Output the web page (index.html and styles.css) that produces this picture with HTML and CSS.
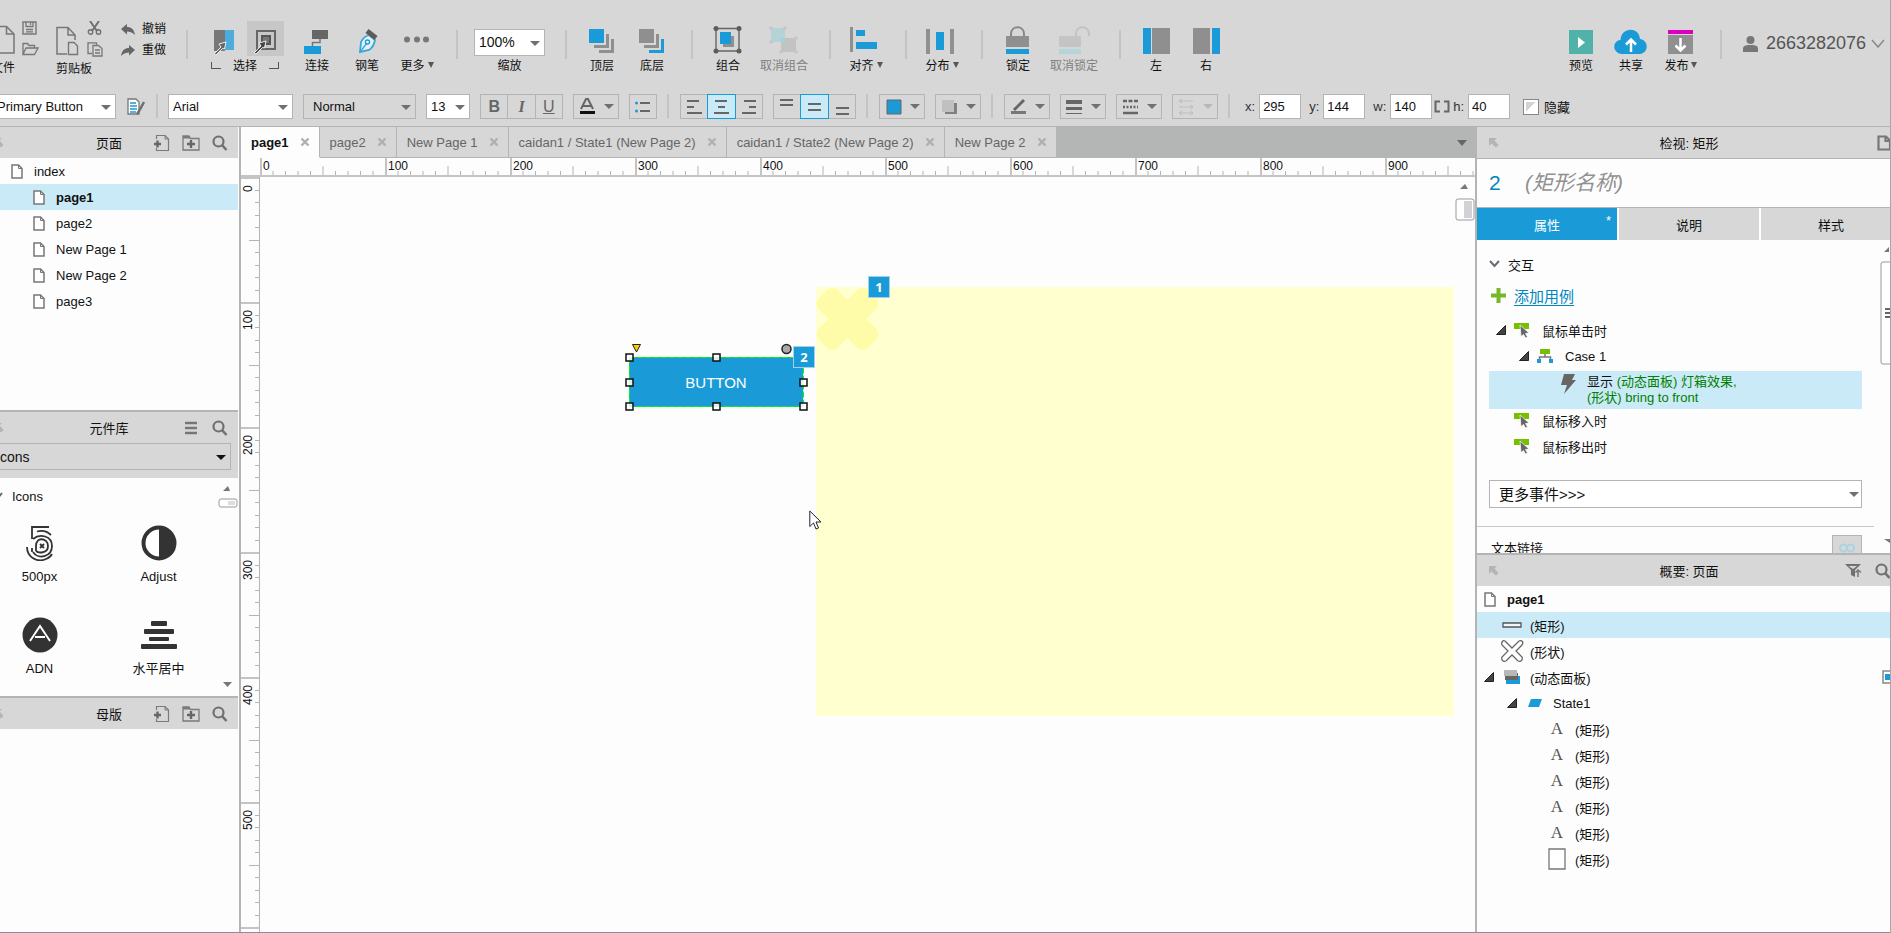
FILE: index.html
```html
<!DOCTYPE html>
<html lang="zh-CN">
<head>
    <meta charset="UTF-8">
    <meta name="viewport" content="width=device-width, initial-scale=1.0">
    <title>page1</title>
    <link rel="stylesheet" href="styles.css">
</head>
<body>
    <!-- shared icons -->
    <svg class="sprite" width="0" height="0" aria-hidden="true">
        <symbol id="i-page" viewBox="0 0 12 15">
            <path d="M1 1H7.500L11 4.500V14H1Z" fill="#fff" stroke="#777" stroke-width="1.500"/>
            <path d="M7.500 1V4.500H11" fill="none" stroke="#777"/>
        </symbol>
        <symbol id="i-add-page" viewBox="0 0 16 18">
            <path d="M2.500 5V1.500H11L14.500 5V16.500H2.500V14" fill="none" stroke="#7a7a7a" stroke-width="1.200"/>
            <path d="M11 1.500V5H14.500" fill="none" stroke="#7a7a7a"/>
            <path d="M0 10H7M3.500 6.500V13.500" stroke="#666" stroke-width="2.400"/>
        </symbol>
        <symbol id="i-add-folder" viewBox="0 0 18 16">
            <path d="M1 15V1H7L8.500 3.500H17V15Z" fill="none" stroke="#7a7a7a" stroke-width="1.300"/>
            <path d="M1 1H7L8.500 3.500H1Z" fill="#7a7a7a"/>
            <path d="M5 9H13M9 5V13" stroke="#666" stroke-width="2.400"/>
        </symbol>
        <symbol id="i-search" viewBox="0 0 16 16">
            <circle cx="6.500" cy="6.500" r="5" fill="none" stroke="#707070" stroke-width="2.200"/>
            <path d="M10 10L14.500 15" stroke="#707070" stroke-width="2.600"/>
        </symbol>
        <symbol id="i-corner" viewBox="0 0 10 10">
            <path d="M0 0H8L5.500 2.500L9.500 7L7 9.500L2.500 5.500L0 8Z" fill="#b5b5b5"/>
        </symbol>
        <symbol id="i-event" viewBox="0 0 16 16">
            <path d="M0 1H15V7H0Z" fill="#76c000"/>
            <path d="M6 3L15 11L11.500 11.500L13.500 15L11.500 16L9.500 12.500L7 14.500Z" fill="#666" stroke="#fff" stroke-width=".7"/>
        </symbol>
        <symbol id="i-toggle" viewBox="0 0 10 10">
            <path d="M.5 9.500H9.500V.5Z" fill="#444" stroke="#222"/>
        </symbol>
        <symbol id="i-close" viewBox="0 0 10 10">
            <path d="M1.500 1.500L8.500 8.500M8.500 1.500L1.500 8.500" stroke="#b0b0b0" stroke-width="2.400"/>
        </symbol>
    </svg>

    <div class="app">
        <nav class="menubar">
            <span>文件</span><span>编辑</span><span>视图</span><span>项目</span><span>布局</span><span>发布</span><span>团队</span><span>账号</span><span>帮助</span>
        </nav>

        <header class="toolbar">
            <div class="file-tools">
                <div class="file-block">
                    <div class="file-icons">
                        <button aria-label="新建"><svg width="24" height="35"><path d="M2 5.500H15.500L23 13V32H2ZM15.500 5.500V13H23" fill="none" stroke="#777" stroke-width="1.500"/></svg></button>
                        <div class="mini">
                            <button aria-label="保存"><svg width="16" height="14"><path d="M1 1H14V13H1Z" fill="none" stroke="#777" stroke-width="1.400"/><path d="M4 1V5.500H11V1M8.500 1.500V4M4 8.500H11M4 10.800H11" fill="none" stroke="#777" stroke-width="1.300"/></svg></button>
                            <button aria-label="打开"><svg width="17" height="14"><path d="M1 12.500V1.500H5.500L7 3.500H12.500V6M1 12.500L4 6H16L12.500 12.500Z" fill="none" stroke="#777" stroke-width="1.300"/></svg></button>
                        </div>
                    </div>
                    <span class="file-label">文件</span>
                </div>
                <div class="file-block">
                    <div class="file-icons">
                        <button aria-label="粘贴"><svg width="24" height="35"><path d="M11 32H1V5.500H12L19 13V18M12 5.500V13H19" fill="none" stroke="#777" stroke-width="1.500"/><path d="M12.500 20.500H18L21.500 24V32.500H12.500Z" fill="none" stroke="#777" stroke-width="1.400"/></svg></button>
                        <div class="mini">
                            <button aria-label="剪切"><svg width="16" height="14"><path d="M3 0L10 10M12 0L5 10" stroke="#707070" stroke-width="2"/><circle cx="3.500" cy="11" r="2.200" fill="none" stroke="#707070" stroke-width="1.400"/><circle cx="11.500" cy="11" r="2.200" fill="none" stroke="#707070" stroke-width="1.400"/></svg></button>
                            <button aria-label="复制"><svg width="17" height="15"><path d="M5 11.500H1V.8H9.500V3" fill="none" stroke="#777" stroke-width="1.300"/><path d="M6 3.500H11.500L15 6.500V14H6ZM8 8H13M8 11H13" fill="none" stroke="#777" stroke-width="1.300"/></svg></button>
                        </div>
                    </div>
                    <span class="file-label">剪贴板</span>
                </div>
                <div class="history">
                    <button><svg width="14" height="12"><path d="M0 5L6 0V3C10 3 13 5 14 11C11 8 9 7.500 6 7.500V10.500Z" fill="#666"/></svg>撤销</button>
                    <button><svg width="14" height="12"><path d="M14 5L8 0V3C4 3 1 5 0 11C3 8 5 7.500 8 7.500V10.500Z" fill="#666"/></svg>重做</button>
                </div>
            </div>
            <i class="sep"></i>

            <div class="select-tool">
                <div class="select-icons">
                    <button aria-label="相交选择"><svg width="23" height="35"><path d="M1 9H12V30H1Z" fill="#777"/><path d="M12 9H21V29H12Z" fill="#4eacdc"/><path d="M1 33L8 26L6 23L13 21L11.500 28L9.500 27.500L3 34Z" fill="#666" stroke="#eee"/></svg></button>
                    <button class="active" aria-label="包含选择"><svg width="37" height="35"><path d="M10 10H28V28H10Z" fill="none" stroke="#666" stroke-width="2"/><path d="M15 15H23V23H15Z" fill="#777" stroke="#555" stroke-width="2"/><path d="M7 32L14 25L12 22L19 20L17.500 27L15.500 26.500L9 33Z" fill="#444" stroke="#eee"/></svg></button>
                </div>
                <div class="select-label">
                    <i class="bracket"></i><span>选择</span><i class="bracket bracket-end"></i>
                </div>
            </div>
            <button class="tool"><svg width="50" height="35"><path d="M20 9H36V18H20Z" fill="#666"/><path d="M12 25H29V33H12Z" fill="#1a9bd7"/><path d="M28 18V21.500H20.500V25" fill="none" stroke="#777" stroke-width="1.500"/></svg><span>连接</span></button>
            <button class="tool"><svg width="50" height="35"><path d="M18 31L19 21C21 17 24 15 27 14L33 19C32 24 30 27 27 29Z" fill="#e4f1f8" stroke="#3ba6da" stroke-width="1.800"/><path d="M18 31L25 22" stroke="#3ba6da" stroke-width="1.300"/><circle cx="25.500" cy="21" r="2" fill="#fff" stroke="#1a9bd7" stroke-width="1.400"/><path d="M25 10L34 17" stroke="#5c5c5c" stroke-width="5"/></svg><span>钢笔</span></button>
            <button class="tool"><svg width="50" height="35"><g fill="#777"><circle cx="15" cy="18.500" r="3"/><circle cx="25" cy="18.500" r="3"/><circle cx="34" cy="18.500" r="3"/></g></svg><span class="caret">更多</span></button>
            <i class="sep"></i>

            <div class="zoom">
                <span class="drop"><select id="zoom"><option>100%</option></select></span>
                <label for="zoom">缩放</label>
            </div>
            <i class="sep"></i>

            <button class="tool"><svg width="50" height="35"><path d="M12 8H27V22H12Z" fill="#1a9bd7"/><path d="M32 13V27H17V24H29V13ZM37 18V32H22V29H34V18Z" fill="#8f8f8f"/></svg><span>顶层</span></button>
            <button class="tool"><svg width="50" height="35"><path d="M12 8H27V22H12ZM32 13V27H17V24H29V13Z" fill="#8f8f8f"/><path d="M37 18V32H22V29H34V18Z" fill="#1a9bd7"/></svg><span>底层</span></button>
            <i class="sep"></i>

            <button class="tool"><svg width="50" height="35"><path d="M20 15H31V26H20Z" fill="#909090"/><path d="M17 11H28V23H17Z" fill="#1a9bd7"/><path d="M13 7.500H36V30H13Z" fill="none" stroke="#666" stroke-width="1.400"/><g fill="#5c5c5c"><circle cx="13" cy="7.500" r="2.500"/><circle cx="36" cy="7.500" r="2.500"/><circle cx="13" cy="30" r="2.500"/><circle cx="36" cy="30" r="2.500"/></g></svg><span>组合</span></button>
            <button class="tool wide" disabled><svg width="62" height="35"><path d="M18 7H32V21H18Z" fill="#b5d2d7"/><path d="M28 17H43V31H28Z" fill="#c3c3c3"/><path d="M28 17H32V21H28Z" fill="#9fd3de"/><g fill="#c6c6c6"><circle cx="18" cy="7" r="1.800"/><circle cx="32" cy="7" r="1.800"/><circle cx="18" cy="21" r="1.800"/><circle cx="43" cy="17" r="1.800"/><circle cx="28" cy="31" r="1.800"/><circle cx="43" cy="31" r="1.800"/></g></svg><span>取消组合</span></button>
            <i class="sep"></i>

            <button class="tool"><svg width="50" height="35"><path d="M9 6H12V31H9Z" fill="#909090"/><path d="M15 9H24V15H15ZM15 21H36V28H15Z" fill="#1a9bd7"/></svg><span class="caret">对齐</span></button>
            <i class="sep"></i>

            <button class="tool"><svg width="50" height="35"><path d="M9 8H13V33H9ZM33 8H37V33H33Z" fill="#909090"/><path d="M19 11H27V29H19Z" fill="#1a9bd7"/></svg><span class="caret">分布</span></button>
            <i class="sep"></i>

            <button class="tool"><svg width="50" height="35"><path d="M18 16V13C18 4 31 4 31 13V16" fill="none" stroke="#888" stroke-width="2"/><path d="M13 15H36V26H13Z" fill="#8f8f8f"/><path d="M13 28H36V33H13Z" fill="#1a9bd7"/></svg><span>锁定</span></button>
            <button class="tool wide" disabled><svg width="62" height="35"><path d="M33 16V13C33 4 46 4 46 13V15" fill="none" stroke="#c2c2c2" stroke-width="2"/><path d="M16 15H38V26H16Z" fill="#c4c4c4"/><path d="M16 28H38V33H16Z" fill="#b3d4d8"/></svg><span>取消锁定</span></button>
            <i class="sep"></i>

            <button class="tool"><svg width="50" height="35"><path d="M12 7H20V33H12Z" fill="#1a9bd7"/><path d="M21 7H39V33H21Z" fill="#8f8f8f"/></svg><span>左</span></button>
            <button class="tool"><svg width="50" height="35"><path d="M12 7H29V33H12Z" fill="#8f8f8f"/><path d="M31 7H39V33H31Z" fill="#1a9bd7"/></svg><span>右</span></button>

            <div class="publish">
                <button class="tool"><svg width="50" height="35"><path d="M13 9H37V33H13Z" fill="#50b2a8"/><path d="M22 16V27L29 21.500Z" fill="#fff"/></svg><span>预览</span></button>
                <button class="tool"><svg width="50" height="35"><path d="M16 33C6 32 6 20 14.500 19C15 6 33 5 34 18C43 19 43 32 34 33Z" fill="#1a9bd7"/><path d="M25 31V19M20 23.500L25 18.500L30 23.500" fill="none" stroke="#fff" stroke-width="2.500"/></svg><span>共享</span></button>
                <button class="tool"><svg width="50" height="35"><path d="M12 9H37V13H12Z" fill="#db00c0"/><path d="M12 14H37V33H12Z" fill="#909090"/><path d="M24.500 17V29M19.500 24.500L24.500 29.500L29.500 24.500" fill="none" stroke="#fff" stroke-width="2.500"/></svg><span class="caret">发布</span></button>
                <i class="sep"></i>
                <button class="user">
                    <svg width="15" height="16"><circle cx="7.500" cy="4" r="4" fill="#777"/><path d="M0 16V12C1 9 4 9 7.500 9C11 9 14 9 15 12V16Z" fill="#777"/></svg>
                    <span>2663282076</span>
                    <svg width="14" height="9"><path d="M1 1L7 8L13 1" fill="none" stroke="#888" stroke-width="1.500"/></svg>
                </button>
            </div>
        </header>

        <div class="formatbar">
            <span class="drop style-drop"><select aria-label="样式"><option>Primary Button</option></select></span>
            <button class="plain" aria-label="管理样式"><svg width="18" height="18"><path d="M1 1H9L12 4V16H1Z" fill="#fff" stroke="#777" stroke-width="1.300"/><path d="M3 5H9M3 8H10M3 11H10M3 14H9" stroke="#1a9bd7" stroke-width="1.500"/><path d="M17 4L12 13L10 16" fill="none" stroke="#707070" stroke-width="2.500"/></svg></button>
            <i class="sep"></i>
            <span class="drop font-drop"><select aria-label="字体"><option>Arial</option></select></span>
            <span class="drop weight-drop"><select aria-label="字重"><option>Normal</option></select></span>
            <span class="drop size-drop"><select aria-label="字号"><option>13</option></select></span>
            <div class="seg">
                <button class="bold" aria-label="粗体">B</button>
                <button class="italic" aria-label="斜体">I</button>
                <button class="underline" aria-label="下划线">U</button>
            </div>
            <button class="pick" aria-label="文字颜色"><svg width="20" height="18"><path d="M3 11L8 1H10L15 11M5 8H13" fill="none" stroke="#666" stroke-width="2"/><path d="M2 13H17V16H2Z" fill="#111"/></svg></button>
            <button class="box" aria-label="项目符号"><svg width="18" height="14"><circle cx="2.500" cy="3" r="1.500" fill="#1a9bd7"/><circle cx="2.500" cy="11" r="1.500" fill="#1a9bd7"/><path d="M6 3H16M6 11H16" stroke="#666" stroke-width="2"/></svg></button>
            <i class="sep"></i>
            <div class="seg">
                <button aria-label="左对齐"><svg width="16" height="16"><path d="M1 2H13M1 8H8M1 14H16" stroke="#666" stroke-width="2"/></svg></button>
                <button class="on" aria-label="居中"><svg width="16" height="16"><path d="M2 2H14M5 8H12M1 14H16" stroke="#666" stroke-width="2"/></svg></button>
                <button aria-label="右对齐"><svg width="16" height="16"><path d="M3 2H15M8 8H15M1 14H15" stroke="#666" stroke-width="2"/></svg></button>
            </div>
            <div class="seg">
                <button aria-label="顶部对齐"><svg width="16" height="16"><path d="M1 1H14M1 6H14" stroke="#666" stroke-width="2"/></svg></button>
                <button class="on" aria-label="垂直居中"><svg width="16" height="16"><path d="M2 5H15M2 11H15" stroke="#666" stroke-width="2"/></svg></button>
                <button aria-label="底部对齐"><svg width="16" height="16"><path d="M2 9H15M2 15H15" stroke="#666" stroke-width="2"/></svg></button>
            </div>
            <i class="sep"></i>
            <button class="pick" aria-label="填充颜色"><svg width="20" height="18"><path d="M3 2H17V16H3Z" fill="#1a9bd7" stroke="#666"/></svg></button>
            <button class="pick" aria-label="外部阴影"><svg width="20" height="18"><path d="M5 5H17V16H5Z" fill="#808080"/><path d="M2 2H14V14H2Z" fill="#c0c0c0"/></svg></button>
            <i class="sep"></i>
            <button class="pick" aria-label="线条颜色"><svg width="20" height="18"><path d="M2 13H17V16H2Z" fill="#777"/><path d="M5 12L15 2" stroke="#666" stroke-width="3"/></svg></button>
            <button class="pick" aria-label="线宽"><svg width="20" height="18"><path d="M1 2H17V6H1ZM1 9H17V12H1ZM1 15H17V16H1Z" fill="#666"/></svg></button>
            <button class="pick" aria-label="线条样式"><svg width="20" height="18"><path d="M2 3H17" stroke="#666" stroke-width="2.500" stroke-dasharray="4 1.500"/><path d="M2 9H17" stroke="#666" stroke-width="2.500" stroke-dasharray="2 1.500"/><path d="M2 15H17" stroke="#666" stroke-width="2.500"/></svg></button>
            <button class="pick" aria-label="箭头样式" disabled><svg width="20" height="18"><path d="M2 3H16M2 9H16M2 15H16M2 3L5 1M2 3L5 5M16 9L13 7M16 9L13 11M2 15L5 13M2 15L5 17M16 15L13 13M16 15L13 17" stroke="#bdbdbd"/></svg></button>
            <i class="sep"></i>
            <div class="fields">
                <label>x: <input type="text" value="295"></label>
                <label>y: <input type="text" value="144"></label>
                <label>w: <input type="text" value="140"></label>
                <button class="ratio" aria-label="保持宽高比"><svg width="16" height="13"><path d="M6 1.500H1.500V11.500H6M10 1.500H14.500V11.500H10" fill="none" stroke="#666" stroke-width="2"/></svg></button>
                <label>h: <input type="text" value="40"></label>
            </div>
            <label class="hidden-check"><input type="checkbox"> 隐藏</label>
        </div>

        <main class="workspace">
            <aside class="left">
                <section class="panel pages">
                    <div class="panel-head">
                        <svg width="10" height="10"><use href="#i-corner"/></svg>
                        <h2>页面</h2>
                        <div class="head-icons">
                            <button aria-label="添加页面"><svg width="16" height="18"><use href="#i-add-page"/></svg></button>
                            <button aria-label="添加文件夹"><svg width="18" height="16"><use href="#i-add-folder"/></svg></button>
                            <button aria-label="搜索"><svg width="16" height="16"><use href="#i-search"/></svg></button>
                        </div>
                    </div>
                    <ul class="page-list">
                        <li class="root"><svg width="12" height="15"><use href="#i-page"/></svg>index</li>
                        <li class="selected"><svg width="12" height="15"><use href="#i-page"/></svg>page1</li>
                        <li><svg width="12" height="15"><use href="#i-page"/></svg>page2</li>
                        <li><svg width="12" height="15"><use href="#i-page"/></svg>New Page 1</li>
                        <li><svg width="12" height="15"><use href="#i-page"/></svg>New Page 2</li>
                        <li><svg width="12" height="15"><use href="#i-page"/></svg>page3</li>
                    </ul>
                </section>

                <section class="panel library">
                    <div class="panel-head">
                        <svg width="10" height="10"><use href="#i-corner"/></svg>
                        <h2>元件库</h2>
                        <div class="head-icons">
                            <button aria-label="选项"><svg width="18" height="14"><path d="M3 2H15M3 7H15M3 12H15" stroke="#777" stroke-width="2.400"/></svg></button>
                            <button aria-label="搜索"><svg width="16" height="16"><use href="#i-search"/></svg></button>
                        </div>
                    </div>
                    <div class="library-pick">
                        <span class="drop"><select aria-label="元件库"><option>Icons</option></select></span>
                    </div>
                    <div class="library-body">
                        <h3><svg width="10" height="8"><path d="M1 1L5 6L9 1" fill="none" stroke="#666" stroke-width="2"/></svg>Icons</h3>
                        <div class="widgets">
                            <figure>
                                <svg width="36" height="36" fill="none" stroke="#333" stroke-width="1.800"><path d="M27 2H10V14M15 6.500C20 5 25 6 29 10M11 14C18 8 30 11 30 21C30 32 16 35 11 27M14 26V21C14 11 26 13 26 21C26 29 16 28 14 26M5 22C5 32 15 38 24 34C27 33 29 31 30 29M10 23V27"/><path d="M18 19L22 23M22 19L18 23"/></svg>
                                <figcaption>500px</figcaption>
                            </figure>
                            <figure>
                                <svg width="36" height="36"><circle cx="18" cy="18" r="15.500" fill="#fff" stroke="#333" stroke-width="4"/><path d="M18 3A15 15 0 0 1 18 33Z" fill="#333"/></svg>
                                <figcaption>Adjust</figcaption>
                            </figure>
                            <figure>
                                <svg width="36" height="36"><circle cx="18" cy="18" r="17.500" fill="#333"/><path d="M8 24L18 9L28 24M13 20H23" fill="none" stroke="#fff" stroke-width="2"/></svg>
                                <figcaption>ADN</figcaption>
                            </figure>
                            <figure>
                                <svg width="36" height="36"><g fill="#333"><rect x="10" y="4" width="16" height="5" rx="1"/><rect x="3" y="12" width="30" height="5" rx="1"/><rect x="8" y="20" width="20" height="4" rx="1"/><rect x="0" y="27" width="36" height="5" rx="1"/></g></svg>
                                <figcaption>水平居中</figcaption>
                            </figure>
                        </div>
                        <div class="mini-scroll">
                            <svg width="20" height="24"><path d="M5 7L10 2L12 7Z" fill="#777"/><rect x="1" y="15" width="18" height="8" rx="2" fill="#fff" stroke="#999"/><path d="M10 17H17V21H10Z" fill="#ddd"/></svg>
                            <svg width="20" height="6"><path d="M5 0H14L9.500 5Z" fill="#777"/></svg>
                        </div>
                    </div>
                </section>

                <section class="panel masters">
                    <div class="panel-head">
                        <svg width="10" height="10"><use href="#i-corner"/></svg>
                        <h2>母版</h2>
                        <div class="head-icons">
                            <button aria-label="添加母版"><svg width="16" height="18"><use href="#i-add-page"/></svg></button>
                            <button aria-label="添加文件夹"><svg width="18" height="16"><use href="#i-add-folder"/></svg></button>
                            <button aria-label="搜索"><svg width="16" height="16"><use href="#i-search"/></svg></button>
                        </div>
                    </div>
                </section>
            </aside>

            <section class="editor">
                <div class="tabs">
                    <button class="tab current">page1<svg width="10" height="10"><use href="#i-close"/></svg></button>
                    <button class="tab">page2<svg width="10" height="10"><use href="#i-close"/></svg></button>
                    <button class="tab">New Page 1<svg width="10" height="10"><use href="#i-close"/></svg></button>
                    <button class="tab">caidan1 / State1 (New Page 2)<svg width="10" height="10"><use href="#i-close"/></svg></button>
                    <button class="tab">caidan1 / State2 (New Page 2)<svg width="10" height="10"><use href="#i-close"/></svg></button>
                    <button class="tab">New Page 2<svg width="10" height="10"><use href="#i-close"/></svg></button>
                    <button class="tab-menu" aria-label="标签列表"></button>
                </div>
                <div class="ruler-x">
                    <svg width="100%" height="19">
                        <defs>
                            <pattern id="ticks-x" width="125" height="19" patternUnits="userSpaceOnUse">
                                <path d="M0 0H2V17H0Z" fill="#c4c4c4"/>
                                <path d="M13 13V17M25.500 13V17M38 13V17M50.500 13V17M75.500 13V17M88 13V17M100.500 13V17M113 13V17M63 8V17" stroke="#b4b4b4"/>
                            </pattern>
                        </defs>
                        <rect width="100%" height="19" fill="url(#ticks-x)"/>
                    </svg>
                    <div class="marks">
                        <span>0</span><span>100</span><span>200</span><span>300</span><span>400</span><span>500</span><span>600</span><span>700</span><span>800</span><span>900</span>
                    </div>
                </div>
                <div class="stage">
                    <div class="ruler-y">
                        <svg width="19" height="100%">
                            <defs>
                                <pattern id="ticks-y" width="19" height="125" patternUnits="userSpaceOnUse">
                                    <path d="M0 0H19V2H0Z" fill="#c4c4c4"/>
                                    <path d="M14 13.500H18M14 25.500H18M14 38.500H18M14 50.500H18M14 75.500H18M14 88.500H18M14 100.500H18M14 113.500H18M8 63.500H18" stroke="#b4b4b4"/>
                                </pattern>
                            </defs>
                            <rect width="19" height="100%" fill="url(#ticks-y)"/>
                        </svg>
                        <div class="marks">
                            <span>0</span><span>100</span><span>200</span><span>300</span><span>400</span><span>500</span>
                        </div>
                    </div>
                    <div class="canvas">
                        <div class="lightbox"></div>
                        <svg class="cross" width="63" height="64"><g fill="#fffca9"><rect x="-3.500" y="18.500" width="70" height="27" rx="8" transform="rotate(45 31.500 32)"/><rect x="-3.500" y="18.500" width="70" height="27" rx="8" transform="rotate(-45 31.500 32)"/></g></svg>
                        <span class="badge badge-1">1</span>
                        <button class="widget-button">BUTTON</button>
                        <svg class="handles" width="190" height="74">
                            <rect x="8.500" y="18.500" width="174" height="49" fill="none" stroke="#0f0" stroke-dasharray="6 2"/>
                            <g fill="#fff" fill-opacity=".85" stroke="#111" stroke-width="1.500">
                                <rect x="5" y="15" width="7" height="7"/><rect x="92" y="15" width="7" height="7"/><rect x="179" y="15" width="7" height="7"/>
                                <rect x="5" y="40" width="7" height="7"/><rect x="179" y="40" width="7" height="7"/>
                                <rect x="5" y="64" width="7" height="7"/><rect x="92" y="64" width="7" height="7"/><rect x="179" y="64" width="7" height="7"/>
                            </g>
                            <path d="M11.500 5.500H19.500L15.500 13Z" fill="#f5d000" stroke="#222"/>
                            <circle cx="165.500" cy="10" r="4.500" fill="#aaa" stroke="#222" stroke-width="1.500"/>
                        </svg>
                        <span class="badge badge-2">2</span>
                        <svg class="pointer" width="14" height="20"><path d="M.8 1V16.500L4.500 13L7 19L9.500 18L7 12H12Z" fill="#fff" stroke="#223"/></svg>
                        <svg class="canvas-scroll" width="20" height="40"><path d="M5 8L10 3L13 8Z" fill="#777"/><rect x="1" y="18" width="18" height="21" rx="2" fill="#fff" stroke="#999"/><path d="M9 20H17V37H9Z" fill="#d0d2d6"/></svg>
                    </div>
                </div>
            </section>

            <aside class="right">
                <section class="inspector">
                    <div class="panel-head">
                        <svg width="10" height="10"><use href="#i-corner"/></svg>
                        <h2>检视: 矩形</h2>
                        <div class="head-icons"><svg width="14" height="16"><path d="M1.500 1.500H9L13 5.500V14.500H1.500ZM8.500 1.500V6H13" fill="none" stroke="#777" stroke-width="2.200"/></svg></div>
                    </div>
                    <div class="name-row">
                        <span class="num">2</span>
                        <input type="text" aria-label="名称" placeholder="(矩形名称)">
                    </div>
                    <div class="ins-tabs">
                        <button class="current">属性<sup>*</sup></button>
                        <button>说明</button>
                        <button>样式</button>
                    </div>
                    <div class="ins-body">
                        <h3><svg width="11" height="8"><path d="M1 1L5.500 6L10 1" fill="none" stroke="#666b75" stroke-width="2"/></svg>交互</h3>
                        <div class="add-case"><svg width="15" height="15"><path d="M7.500 0V15M0 7.500H15" stroke="#76b82a" stroke-width="4"/></svg><a href="#">添加用例</a></div>
                        <div class="event"><svg class="tri" width="10" height="10"><use href="#i-toggle"/></svg><svg width="16" height="16"><use href="#i-event"/></svg><span>鼠标单击时</span></div>
                        <div class="event case"><svg class="tri" width="10" height="10"><use href="#i-toggle"/></svg><svg width="16" height="16"><path d="M3 1H13V6H3Z" fill="#76c000"/><path d="M8 6V9M2.500 12V9H13.500V12" fill="none" stroke="#777" stroke-width="1.500"/><path d="M0 11H4V15H0ZM12 11H16V15H12Z" fill="#1a9bd7"/></svg><span>Case 1</span></div>
                        <div class="action"><svg width="16" height="20"><path d="M3 0H14L11 6H15L3 20L6 11H0Z" fill="#666"/></svg><p>显示 <em>(动态面板) 灯箱效果,<br>(形状) bring to front</em></p></div>
                        <div class="event leaf"><svg width="16" height="16"><use href="#i-event"/></svg><span>鼠标移入时</span></div>
                        <div class="event leaf"><svg width="16" height="16"><use href="#i-event"/></svg><span>鼠标移出时</span></div>
                        <span class="drop more-events"><select aria-label="更多事件"><option>更多事件&gt;&gt;&gt;</option></select></span>
                        <div class="text-link">
                            <span>文本链接</span>
                            <button aria-label="链接" disabled><svg width="18" height="10"><circle cx="5.500" cy="5" r="3.500" fill="none" stroke="#a9d3e0" stroke-width="2"/><circle cx="12.500" cy="5" r="3.500" fill="none" stroke="#a9d3e0" stroke-width="2"/></svg></button>
                        </div>
                        <svg class="ins-scroll" width="10" height="312"><path d="M4 12L9 7V12ZM4 299H10V303Z" fill="#777"/><rect x="1" y="22" width="18" height="102" rx="2" fill="#fff" stroke="#999"/><path d="M5 69H10M5 73H10M5 77H10" stroke="#666" stroke-width="2"/></svg>
                    </div>
                </section>

                <section class="outline">
                    <div class="panel-head">
                        <svg width="10" height="10"><use href="#i-corner"/></svg>
                        <h2>概要: 页面</h2>
                        <div class="head-icons">
                            <button aria-label="筛选"><svg width="18" height="14"><path d="M0 0H16L10 6V13L6 11V6Z" fill="#707070"/><path d="M13 13V6M10.500 8.500L13 6L16 8.500" fill="none" stroke="#777" stroke-width="1.500"/><path d="M3.500 2H12L8 5Z" fill="#d7d7d7"/></svg></button>
                            <button aria-label="搜索"><svg width="16" height="16"><use href="#i-search"/></svg></button>
                        </div>
                    </div>
                    <ul class="tree">
                        <li class="top"><svg width="12" height="15"><use href="#i-page"/></svg>page1</li>
                        <li class="l1 selected"><i></i><svg width="28" height="22"><path d="M5 9H23V13H5Z" fill="#f4f4f4" stroke="#555" stroke-width="1.300"/></svg>(矩形)</li>
                        <li class="l1"><i></i><svg width="28" height="22"><path d="M7 1L14 8L21 1C24 0 26 2 24 5L18 11L24 17C25 20 23 22 20 21L14 15L8 21C5 22 3 20 4 17L10 11L4 5C3 2 5 0 7 1Z" fill="#fff" stroke="#666" stroke-width="1.300"/></svg>(形状)</li>
                        <li class="l1"><i><svg width="10" height="10"><use href="#i-toggle"/></svg></i><svg width="28" height="22"><path d="M8 10H22V18H8Z" fill="#1a9bd7"/><path d="M7 7H20V14H7Z" fill="#666"/><path d="M6 4H19V10H6Z" fill="#b8b8b8"/></svg>(动态面板)<svg class="view-toggle" width="8" height="14"><path d="M9 1H1V13H9" fill="#fff" stroke="#888" stroke-width="1.500"/><path d="M3 4H8V10H3Z" fill="#1a9bd7"/></svg></li>
                        <li class="l2"><i><svg width="10" height="10"><use href="#i-toggle"/></svg></i><svg width="28" height="22"><path d="M10 7H21L18 15H7Z" fill="#1a9bd7"/></svg>State1</li>
                        <li class="l3"><i></i><b>A</b>(矩形)</li>
                        <li class="l3"><i></i><b>A</b>(矩形)</li>
                        <li class="l3"><i></i><b>A</b>(矩形)</li>
                        <li class="l3"><i></i><b>A</b>(矩形)</li>
                        <li class="l3"><i></i><b>A</b>(矩形)</li>
                        <li class="l3"><i></i><svg width="28" height="22"><path d="M6 1H22V21H6Z" fill="#fff" stroke="#777" stroke-width="1.300"/></svg>(矩形)</li>
                    </ul>
                </section>
            </aside>
        </main>
    </div>
</body>
</html>
```
FILE: styles.css
```css
* {
    box-sizing: border-box;
}

body {
    margin: 0;
    font-family: "Liberation Sans", "Noto Sans CJK SC", sans-serif;
    font-size: 13px;
    color: #111;
    background: #fdfdfd;
}

button, input, select {
    font: inherit;
    color: inherit;
    margin: 0;
    padding: 0;
    border: 0;
    border-radius: 0;
    background: none;
}

h2, h3, p, ul, figure {
    margin: 0;
    padding: 0;
    font-size: 13px;
    font-weight: normal;
    list-style: none;
}

svg {
    display: block;
    flex: none;
}

.sprite {
    position: absolute;
}

.app {
    height: 100vh;
    display: flex;
    flex-direction: column;
    overflow: hidden;
    border-right: 1px solid #a8a8a8;
    border-bottom: 1px solid #909090;
}

/* menu, scrolled almost out of the window */
.menubar {
    height: 2px;
    flex: none;
    display: flex;
    align-items: flex-end;
    gap: 20px;
    margin-left: -8px;
    font-size: 13px;
    line-height: 16px;
    background: #d7d7d7;
    overflow: hidden;
}

/* main toolbar */
.toolbar {
    height: 84px;
    flex: none;
    display: flex;
    align-items: flex-start;
    padding-top: 19px;
    background: #d7d7d7;
    font-size: 12px;
    white-space: nowrap;
}

.sep {
    flex: none;
    width: 2px;
    height: 29px;
    background: #c3c3c3;
}

.toolbar .sep {
    margin: 9px 10px 0 14px;
}

.tool {
    width: 50px;
    flex: none;
    display: flex;
    flex-direction: column;
    align-items: center;
    line-height: 21px;
}

.tool.wide {
    width: 62px;
}

.tool:disabled {
    color: #808080;
}

.caret::after {
    content: "";
    display: inline-block;
    margin-left: 3px;
    vertical-align: 2px;
    border: 3px solid transparent;
    border-top: 6px solid #555;
    border-bottom: 0;
}

.file-tools {
    display: flex;
    margin-left: -9px;
}

.file-block {
    width: 65px;
    display: flex;
    flex-direction: column;
}

.file-icons {
    display: flex;
    gap: 7px;
}

.mini {
    display: flex;
    flex-direction: column;
    gap: 7px;
}

.file-label {
    line-height: 24px;
}

.history {
    display: flex;
    flex-direction: column;
    margin-top: -2px;
}

.history button {
    display: flex;
    align-items: center;
    gap: 7px;
    line-height: 21px;
    height: 21px;
}

.file-tools + .sep {
    margin-left: 20px;
}

.select-tool {
    width: 94px;
    padding-left: 13px;
}

.select-icons {
    display: flex;
    justify-content: space-between;
    width: 73px;
    padding-left: 2px;
}

.select-icons .active {
    background: #c7c7c7;
}

.select-label {
    display: flex;
    gap: 12px;
    line-height: 21px;
}

.bracket {
    width: 10px;
    height: 7px;
    margin-top: 6px;
    border-left: 1px solid #555;
    border-bottom: 1px solid #555;
}

.bracket-end {
    border-left: 0;
    border-right: 1px solid #555;
}

.zoom {
    width: 77px;
    padding: 8px 0 0 6px;
    display: flex;
    flex-direction: column;
    align-items: center;
    line-height: 21px;
}

.zoom .drop {
    width: 71px;
    height: 27px;
    font-size: 14px;
}

.zoom + .sep {
    margin-left: 20px;
}

.publish {
    display: flex;
    margin-left: auto;
}

.user {
    display: flex;
    align-items: center;
    height: 45px;
    padding: 0 5px 0 11px;
    font-size: 18px;
    color: #555;
}

.user span {
    margin: 0 5px 0 8px;
}

/* drop-downs */
.drop {
    position: relative;
    display: block;
    height: 25px;
    flex: none;
    border: 1px solid #b4b4b4;
    background: #fff;
}

.drop select {
    appearance: none;
    width: 100%;
    height: 100%;
    padding-left: 4px;
    outline: 0;
}

.drop::after {
    content: "";
    position: absolute;
    right: 4px;
    top: 50%;
    margin-top: -2px;
    border: 5px solid transparent;
    border-top-color: #707070;
    border-bottom: 0;
    pointer-events: none;
}

/* format bar */
.formatbar {
    height: 41px;
    flex: none;
    display: flex;
    align-items: flex-start;
    gap: 10px;
    padding-top: 8px;
    background: #d7d7d7;
    border-bottom: 1px solid #b4b4b4;
}

.formatbar .sep {
    height: 24px;
    margin-right: 1px;
}

.style-drop {
    width: 124px;
    margin-left: -8px;
}

.plain {
    height: 25px;
    margin: 0 1px;
}

.formatbar .plain + .sep {
    margin-right: 0;
}

.font-drop {
    width: 125px;
}

.weight-drop {
    width: 113px;
    background: #d7d7d7;
}

.weight-drop select {
    padding-left: 9px;
}

.size-drop {
    width: 44px;
}

.seg {
    display: flex;
    width: 83px;
    height: 25px;
    flex: none;
}

.seg button {
    flex: 1;
    display: flex;
    align-items: center;
    justify-content: center;
    border: 1px solid #b4b4b4;
    color: #666;
    font-size: 16px;
}

.seg button + button {
    margin-left: -1px;
}

.seg .on {
    background: #cbeaf7;
    border-color: #1a9bd7;
    z-index: 1;
}

.seg .bold {
    font-weight: bold;
}

.seg .italic {
    font-family: "Liberation Serif", serif;
    font-style: italic;
    font-weight: bold;
}

.seg .underline {
    text-decoration: underline;
}

.box, .pick {
    flex: none;
    height: 25px;
    display: flex;
    align-items: center;
    border: 1px solid #b4b4b4;
}

.box {
    width: 28px;
    justify-content: center;
}

.pick {
    width: 46px;
    padding: 0 4px;
    justify-content: space-between;
}

.pick::after {
    content: "";
    border: 5px solid transparent;
    border-top-color: #707070;
    border-bottom: 0;
}

.pick:disabled::after {
    border-top-color: #b8b8b8;
}

.fields {
    display: flex;
    margin-left: 4px;
}

.fields label {
    display: flex;
    align-items: center;
    gap: 4px;
    margin-right: 8px;
    color: #333;
}

.fields input {
    width: 42px;
    height: 25px;
    padding-left: 3px;
    background: #fff;
    border: 1px solid #b4b4b4;
    color: #111;
}

.ratio {
    margin: 0 3px 0 -6px;
}

.hidden-check {
    display: flex;
    align-items: center;
    gap: 5px;
    height: 25px;
    margin-left: -5px;
}

.hidden-check input {
    appearance: none;
    width: 16px;
    height: 16px;
    border: 1px solid #888;
    background: linear-gradient(135deg, #d0d4d6 48%, #fff 50%);
    box-shadow: inset 0 0 0 2px #fff;
}

/* workspace */
.workspace {
    flex: 1;
    min-height: 0;
    display: flex;
}

.left {
    width: 241px;
    flex: none;
    display: flex;
    flex-direction: column;
    padding-right: 1px;
    border-right: 2px solid #b4b4b4;
    overflow: hidden;
}

.panel-head {
    height: 31px;
    flex: none;
    display: grid;
    grid-template-columns: 1fr auto 1fr;
    align-items: center;
    background: #d7d7d7;
}

.left .panel-head {
    margin-left: -21px;
    padding: 0 10px 0 15px;
}

.left .panel-head h2 {
    margin-left: -4px;
}

.head-icons {
    display: flex;
    align-items: center;
    justify-content: flex-end;
    gap: 12px;
}

.pages {
    flex: 0 0 283px;
}

.page-list li {
    display: flex;
    align-items: center;
    gap: 11px;
    height: 26px;
    padding-left: 33px;
}

.page-list .root {
    padding-left: 11px;
}

.selected {
    background: #cbeaf7;
}

.page-list .selected {
    font-weight: bold;
}

.library {
    flex: 0 0 286px;
    min-height: 0;
    border-top: 2px solid #b4b4b4;
    display: flex;
    flex-direction: column;
}

.library-pick {
    height: 35px;
    flex: none;
    padding-right: 7px;
    background: #d7d7d7;
}

.library-pick .drop {
    height: 27px;
    margin-left: -9px;
    background: #d7d7d7;
    font-size: 14px;
}

.library-pick .drop::after {
    border-top-color: #111;
}

.library-body {
    position: relative;
    flex: 1;
    min-height: 0;
    padding-top: 8px;
    overflow: hidden;
}

.library-body h3 {
    display: flex;
    align-items: center;
    gap: 9px;
    height: 20px;
    margin-left: -7px;
}

.widgets {
    display: grid;
    grid-template-columns: 119px 119px;
    padding-top: 19px;
    margin-left: -20px;
}

.widgets figure {
    height: 92px;
    display: flex;
    flex-direction: column;
    align-items: center;
    gap: 6px;
    line-height: 20px;
}

.mini-scroll {
    position: absolute;
    top: 6px;
    right: 0;
    bottom: 8px;
    display: flex;
    flex-direction: column;
    justify-content: space-between;
}

.masters {
    flex: 1;
    border-top: 2px solid #b4b4b4;
}

/* editor */
.editor {
    flex: 1;
    min-width: 0;
    display: flex;
    flex-direction: column;
}

.tabs {
    height: 31px;
    flex: none;
    display: flex;
    background: #b4b6b5;
}

.tab {
    flex: none;
    display: flex;
    align-items: center;
    gap: 11px;
    padding: 0 9px 0 10px;
    background: #d7d7d7;
    border-right: 1px solid #b4b4b4;
    border-bottom: 1px solid #b4b4b4;
    color: #666;
    white-space: nowrap;
}

.tab.current {
    background: #fdfdfd;
    border-bottom-color: #fdfdfd;
    color: #111;
    font-weight: bold;
}

.tab-menu {
    margin-left: auto;
    padding-right: 8px;
}

.tab-menu::after {
    content: "";
    display: block;
    border: 5px solid transparent;
    border-top: 6px solid #666;
    border-bottom: 0;
}

.ruler-x {
    position: relative;
    height: 19px;
    flex: none;
    padding-left: 19px;
    border-bottom: 2px solid #c4c4c4;
    overflow: hidden;
    font-size: 12px;
}

.ruler-x .marks {
    position: absolute;
    top: 0;
    left: 22px;
    display: flex;
    line-height: 16px;
}

.ruler-x span {
    flex: 0 0 125px;
}

.stage {
    flex: 1;
    min-height: 0;
    display: flex;
}

.ruler-y {
    position: relative;
    width: 19px;
    flex: none;
    border-right: 1px solid #b4b4b4;
    overflow: hidden;
    font-size: 12px;
}

.ruler-y .marks {
    position: absolute;
    top: 8px;
    left: 0;
    display: flex;
    flex-direction: column;
    width: 15px;
}

/* numbers read from bottom to top */
.ruler-y span {
    flex: 0 0 125px;
    writing-mode: vertical-rl;
    transform: rotate(180deg);
    text-align: right;
    line-height: 15px;
}

.canvas {
    position: relative;
    flex: 1;
    overflow: hidden;
}

/* widgets placed on the free canvas */
.lightbox {
    position: absolute;
    left: 556px;
    top: 110px;
    width: 638px;
    height: 429px;
    background: #ffffd0;
}

.cross {
    position: absolute;
    left: 556px;
    top: 110px;
}

.widget-button {
    position: absolute;
    left: 369px;
    top: 180px;
    width: 174px;
    height: 50px;
    background: #1a9bd7;
    color: #fff;
    font-size: 15px;
}

.handles {
    position: absolute;
    left: 361px;
    top: 162px;
}

.badge {
    position: absolute;
    width: 22px;
    height: 22px;
    border: 1px solid #9ed3ee;
    background: #1a9bd7;
    color: #fff;
    font: bold 13px/20px "Open Sans", sans-serif;
    text-align: center;
}

.badge-1 {
    left: 608px;
    top: 99px;
}

.badge-2 {
    left: 533px;
    top: 169px;
}

.pointer {
    position: absolute;
    left: 549px;
    top: 333px;
}

.canvas-scroll {
    position: absolute;
    right: 0;
    top: 4px;
}

/* right column */
.right {
    width: 415px;
    flex: none;
    display: flex;
    flex-direction: column;
    border-left: 2px solid #b4b4b4;
    overflow: hidden;
}

.right .panel-head {
    margin-right: -11px;
    padding: 0 10px 0 12px;
}

.right .panel-head h2 {
    margin-left: -2px;
}

.inspector {
    flex: 0 0 426px;
    display: flex;
    flex-direction: column;
    overflow: hidden;
}

.name-row {
    height: 50px;
    flex: none;
    display: flex;
    align-items: center;
    padding-left: 12px;
    border-top: 1px solid #b4b4b4;
    border-bottom: 1px solid #b4b4b4;
    font-size: 21px;
}

.name-row .num {
    width: 36px;
    color: #0086bf;
}

.name-row input {
    flex: 1;
    min-width: 0;
    height: 36px;
    font-style: italic;
}

.name-row input::placeholder {
    color: #909090;
    opacity: 1;
}

.ins-tabs {
    height: 32px;
    flex: none;
    display: flex;
    gap: 2px;
    margin-right: -11px;
}

.ins-tabs button {
    position: relative;
    flex: 1;
    background: #d7d7d7;
}

.ins-tabs .current {
    background: #1a9bd7;
    color: #fff;
}

.ins-tabs sup {
    position: absolute;
    top: 6px;
    right: 6px;
    font-size: 13px;
    line-height: 14px;
}

.ins-body {
    position: relative;
    flex: 1;
    min-height: 0;
    padding: 11px 28px 0 12px;
    overflow: hidden;
}

.ins-body h3 {
    display: flex;
    align-items: center;
    gap: 8px;
    height: 26px;
}

.add-case {
    display: flex;
    align-items: center;
    gap: 8px;
    height: 36px;
    padding-left: 2px;
    font-size: 15px;
}

.add-case a {
    color: #0086bf;
    text-underline-offset: 3px;
}

.event {
    display: flex;
    align-items: center;
    height: 26px;
    padding-left: 7px;
}

.event .tri {
    margin-right: 8px;
}

.event span {
    margin-left: 12px;
}

.event.case {
    padding-left: 30px;
}

.event.leaf {
    padding-left: 25px;
}

.add-case + .event {
    margin-top: 4px;
}

.action {
    display: flex;
    align-items: flex-start;
    gap: 10px;
    height: 38px;
    margin: 2px 0 -2px;
    padding: 3px 0 0 72px;
    background: #cbeaf7;
    line-height: 16px;
}

.action em {
    font-style: normal;
    color: #008000;
}

.more-events {
    height: 28px;
    margin-top: 21px;
    font-size: 15px;
}

.more-events select {
    padding-left: 9px;
}

.more-events::after {
    right: 2px;
}

.text-link {
    display: flex;
    justify-content: space-between;
    margin: 18px -12px 0 -12px;
    padding: 8px 12px 0 14px;
    border-top: 1px solid #c8c8c8;
    line-height: 28px;
}

.text-link button {
    width: 30px;
    height: 26px;
    display: flex;
    align-items: center;
    justify-content: center;
    border: 1px solid #b4b4b4;
    background: #d7d7d7;
}

.ins-scroll {
    position: absolute;
    top: 0;
    right: 0;
}

.outline {
    flex: 1;
    border-top: 2px solid #b4b4b4;
}

.tree li {
    display: flex;
    align-items: center;
    height: 26px;
}

.tree .top {
    gap: 11px;
    padding-left: 7px;
    font-weight: bold;
}

.tree .l1 {
    padding-left: 7px;
}

.tree .l2 {
    padding-left: 30px;
}

.tree .l3 {
    padding-left: 52px;
}

.tree i {
    width: 14px;
}

.tree i + svg, .tree b {
    width: 28px;
    margin-right: 4px;
}

.tree b {
    font: 17px "Liberation Serif", serif;
    color: #555;
    text-align: center;
}

.view-toggle {
    margin-left: auto;
}
```
